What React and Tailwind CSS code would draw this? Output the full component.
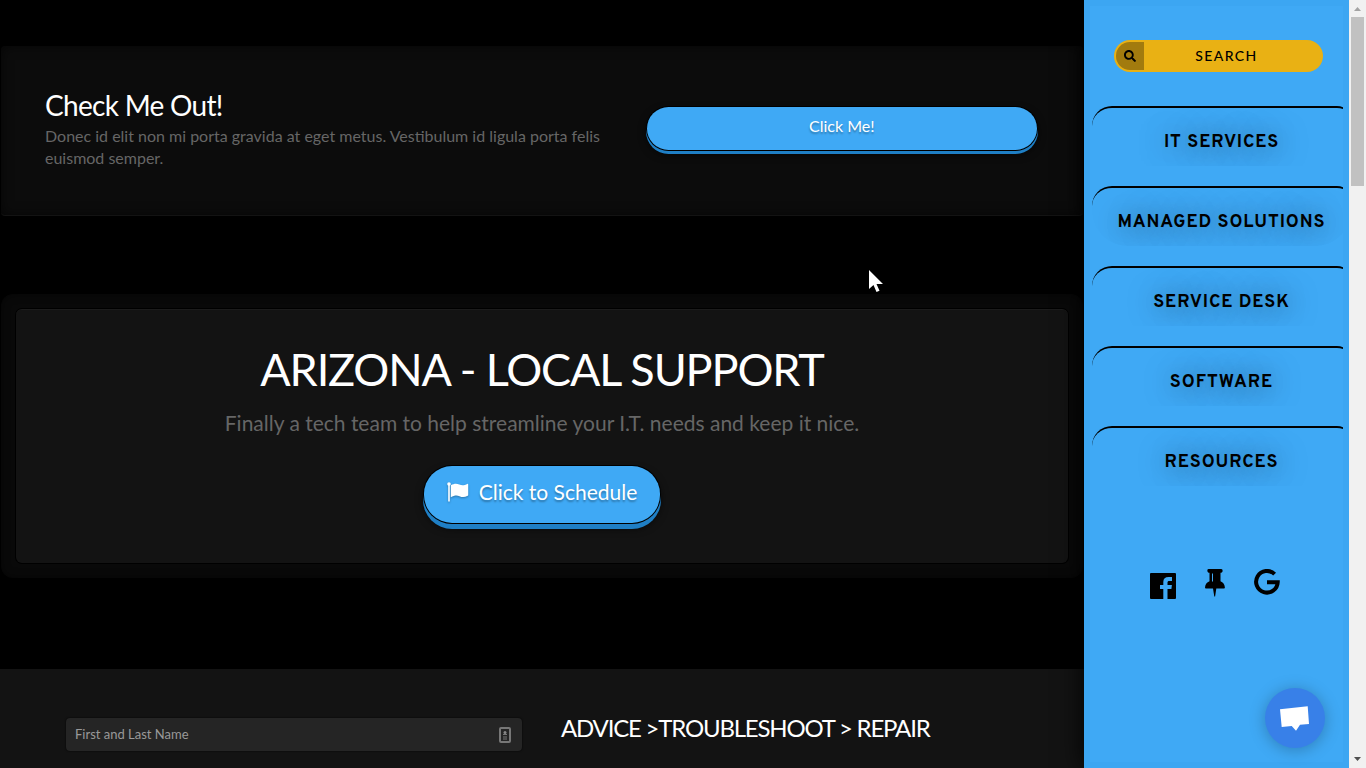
import React, { useState } from 'react';
import { FaSearch } from 'react-icons/fa';

const NAV_LINKS = ['IT Services', 'Managed Solutions', 'Service Desk', 'Software', 'Resources'];

function FlagIcon() {
    return (
        <svg width="22" height="20" viewBox="0 0 22 20" fill="#fff" className="drop-shadow-[0_1px_1px_rgba(0,0,0,0.3)]" aria-hidden="true">
            <circle cx="2" cy="2" r="1.8" />
            <path d="M1.200 2h1.600v17.500H1.200z" />
            <path d="M3.800 3.200C7 1.500 9.500 1.200 12.300 2.500c3 1.400 5.200.8 8-.6.5-.2.9 0 .9.5v10.600c0 .4-.2.6-.5.8-3 1.500-5.200 1.700-8.200.4-2.900-1.300-5.500-.6-8.700 1z" />
        </svg>
    );
}

function FacebookIcon() {
    return (
        <svg width="26" height="26" viewBox="0 0 26 26" aria-hidden="true">
            <path d="M1 0h24a1 1 0 0 1 1 1v24a1 1 0 0 1-1 1h-7.500V16h3.900l.5-4h-4.400V9.600c0-1.200.5-1.700 1.700-1.700H22V4.100h-3.400c-3.400 0-5.300 1.800-5.300 5V12H10v4h3.300v10H1a1 1 0 0 1-1-1V1a1 1 0 0 1 1-1z" />
        </svg>
    );
}

function PinIcon() {
    return (
        <svg width="20" height="28" viewBox="0 0 20 28" aria-hidden="true">
            <path d="M3.500 0h12.700c1 0 1.500.9 1.400 1.900-.1 1.200-.8 1.800-2.100 1.800v8.500c2.600.9 4.100 3 4.400 6.200 0 .6-.3 1-.9 1h-7.700l-1.200 8.200h-.8L8 19.400H.9c-.6 0-.9-.4-.9-1 .3-3.200 1.800-5.300 4.500-6.200V3.700c-1.300 0-2-.6-2.100-1.800C2.300.9 2.600 0 3.500 0z" />
            <path d="M7.500 4.500v8" stroke="#3fa9f5" strokeWidth="1" />
        </svg>
    );
}

function GoogleIcon() {
    return (
        <svg width="26" height="26" viewBox="0 0 26 26" fill="none" stroke="#000" strokeWidth="4" aria-hidden="true">
            <path d="M20.600 5.200A10.800 10.800 0 1 0 23.700 13.300H13" />
        </svg>
    );
}

function Sidebar() {
    const [query, setQuery] = useState('');

    return (
        <aside className="relative z-10 w-[265px] shrink-0 bg-[#3fa9f5] text-black shadow-[0_0_24px_#000,inset_0_0_0_6px_#3ca6f2]">
            <form className="mt-10 mr-[26px] ml-[30px] flex h-8 items-stretch rounded-full bg-[#e9b114] p-[2px]" onSubmit={(e) => e.preventDefault()}>
                <button type="submit" aria-label="Submit search" className="flex w-7 shrink-0 items-center justify-center rounded-l-full bg-[#a27b0e]">
                    <FaSearch size={12} />
                </button>
                <input
                    type="text"
                    aria-label="Search"
                    placeholder="SEARCH"
                    value={query}
                    onChange={(e) => setQuery(e.target.value)}
                    className="min-w-0 flex-1 pr-3 text-center text-sm font-medium tracking-widest outline-none placeholder:text-black"
                />
            </form>

            <nav className="mt-[34px] mr-[6px] ml-2 flex flex-col gap-5 overflow-hidden">
                {NAV_LINKS.map((label) => (
                    <a
                        key={label}
                        href="#"
                        className="flex h-[60px] w-[259px] items-center justify-center overflow-hidden rounded-tl-[20px] rounded-tr-[14px] rounded-b-[36px] border-t-2 border-black pt-3 font-['Overpass','Inter',sans-serif] text-lg font-bold tracking-wider whitespace-nowrap uppercase [text-shadow:2px_2px_28px_rgba(0,0,0,0.6)]"
                    >
                        {label}
                    </a>
                ))}
            </nav>

            <div className="mt-[83px] ml-[66px] flex items-start gap-[29px]">
                <a href="#" aria-label="Facebook" className="pt-1"><FacebookIcon /></a>
                <a href="#" aria-label="Location"><PinIcon /></a>
                <a href="#" aria-label="Google"><GoogleIcon /></a>
            </div>
        </aside>
    );
}

function Scrollbar() {
    return (
        <div className="relative z-20 flex w-[17px] shrink-0 flex-col items-center bg-[#f1f1f1]" aria-hidden="true">
            <svg width="17" height="17" viewBox="0 0 17 17"><path d="M5 11l3.500-4 3.500 4z" fill="#a3a3a3" /></svg>
            <div className="h-[169px] w-[13px] bg-[#c1c1c1]" />
            <svg className="mt-auto" width="17" height="17" viewBox="0 0 17 17"><path d="M5 6h7L8.500 10z" fill="#505050" /></svg>
        </div>
    );
}

export default function App() {
    const [name, setName] = useState('');

    return (
        <div className="relative flex h-screen overflow-hidden bg-black font-['Lato',sans-serif] text-white">
            <main className="min-w-0 flex-1 pt-[46px]">
                {/* Callout */}
                <section className="mx-px grid h-[170px] grid-cols-[3fr_2fr] items-start gap-4 rounded border-b border-[#131313] bg-[#0c0c0c] pr-[46px] pl-11 shadow-[inset_0_0_12px_rgba(0,0,0,0.6)]">
                    <div className="pt-[43px]">
                        <h2 className="text-[28px] leading-8 tracking-tight">Check Me Out!</h2>
                        <p className="mt-1 leading-[22px] text-[#666]">
                            Donec id elit non mi porta gravida at eget metus. Vestibulum id ligula porta felis euismod semper.
                        </p>
                    </div>
                    <button
                        type="button"
                        className="mt-[61px] h-[43px] w-full rounded-full bg-[#3fa9f5] pb-[6px] shadow-[0_0_0_1px_#000,0_3px_0_1px_#1f7fc5,0_4px_9px_rgba(0,0,0,0.75)] [text-shadow:0_2px_2px_rgba(0,0,0,0.3)]"
                    >
                        Click Me!
                    </button>
                </section>

                {/* Local support */}
                <section className="mx-px mt-[78px] rounded-xl bg-[#090909] p-[15px] shadow-[inset_0_0_8px_rgba(0,0,0,0.5)]">
                    <div className="flex h-[254px] flex-col items-center rounded-md border-t border-[#1c1c1c] bg-[#131313] text-center shadow-[0_0_0_1px_#000]">
                        <h1 className="mt-8 text-[45px] leading-[54px] tracking-tight">ARIZONA - LOCAL SUPPORT</h1>
                        <p className="mt-[11px] text-[21px] leading-8 text-[#666]">
                            Finally a tech team to help streamline your I.T. needs and keep it nice.
                        </p>
                        <button
                            type="button"
                            className="mt-[27px] flex h-[57px] items-center gap-[10px] rounded-[28px] bg-[#3fa9f5] px-[23px] pb-[6px] text-[21px] shadow-[0_0_0_1px_#000,0_5px_0_1px_#1f7fc5,0_5px_9px_rgba(0,0,0,0.75)] [text-shadow:0_2px_2px_rgba(0,0,0,0.3)]"
                        >
                            <FlagIcon />
                            Click to Schedule
                        </button>
                    </div>
                </section>

                {/* Contact */}
                <section className="mt-[91px] grid grid-cols-[456px_1fr] items-start gap-[39px] bg-[#131313] pt-[49px] pb-12 pl-[66px]">
                    <div className="flex h-[33px] items-center rounded bg-[#252525] pr-[11px] pl-[9px] shadow-[0_0_2px_#000]">
                        <input
                            type="text"
                            aria-label="First and Last Name"
                            placeholder="First and Last Name"
                            value={name}
                            onChange={(e) => setName(e.target.value)}
                            className="min-w-0 flex-1 text-[13px] text-white outline-none placeholder:text-[#999]"
                        />
                        <svg width="12" height="16" viewBox="0 0 12 16" fill="none" aria-hidden="true">
                            <rect x="1" y="1" width="10" height="14" rx="1" stroke="#777" strokeWidth="2" />
                            <circle cx="6" cy="5.500" r="1.500" fill="#888" />
                            <path d="M4 7.500h4M4 10h4M4 12h4" stroke="#777" />
                        </svg>
                    </div>
                    <h3 className="text-2xl leading-5 tracking-tighter">ADVICE &gt;TROUBLESHOOT &gt; REPAIR</h3>
                </section>
            </main>

            <Sidebar />
            <Scrollbar />

            {/* Chat launcher */}
            <button
                type="button"
                aria-label="Open chat"
                className="absolute right-[41px] bottom-5 z-20 size-[60px] rounded-full bg-[#3880e8] shadow-[0_2px_16px_rgba(0,0,0,0.25)]"
            >
                <svg width="60" height="60" viewBox="0 0 60 60" fill="#fff" aria-hidden="true">
                    <path d="M15 21.300L42.700 18.300 44 36 35 36.700 31 42.700 26.700 38 16.700 39z" />
                </svg>
            </button>

            {/* Pointer */}
            <svg className="absolute top-[269px] left-[868px]" width="16" height="24" viewBox="0 0 16 24" aria-hidden="true">
                <path d="M1 1v19l4.500-4 3 7 3-1.300-3-6.700H15z" fill="#fff" />
            </svg>
        </div>
    );
}
